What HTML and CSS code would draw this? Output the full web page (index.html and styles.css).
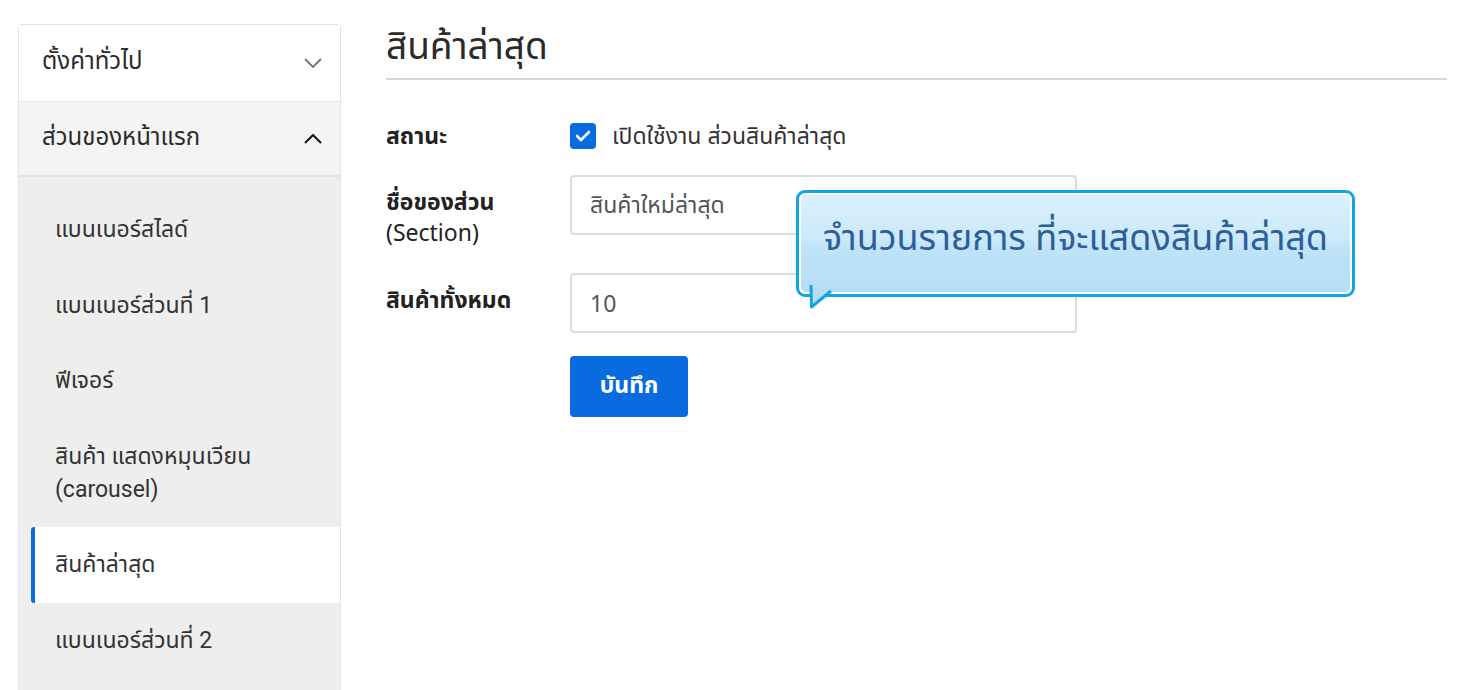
FILE: index.html
```html
<!DOCTYPE html>
<html lang="th">
<head>
    <meta charset="UTF-8">
    <meta name="viewport" content="width=device-width, initial-scale=1.0">
    <title>สินค้าล่าสุด</title>
    <link rel="stylesheet" href="styles.css">
</head>
<body>
    <div class="page">
        <!-- Settings menu -->
        <div class="sidebar">
            <div class="menu-head">
                <span>ตั้งค่าทั่วไป</span>
                <svg class="chevron chevron-down" width="18" height="10" viewBox="0 0 18 10"><path d="M1 1l8 8 8-8" fill="none" stroke="currentColor" stroke-width="1.8"/></svg>
            </div>
            <div class="menu-head open">
                <span>ส่วนของหน้าแรก</span>
                <svg class="chevron" width="18" height="10" viewBox="0 0 18 10"><path d="M1 9l8-8 8 8" fill="none" stroke="currentColor" stroke-width="2"/></svg>
            </div>
            <div class="sub-menu">
                <div class="sub-item">แบนเนอร์สไลด์</div>
                <div class="sub-item">แบนเนอร์ส่วนที่ 1</div>
                <div class="sub-item">ฟีเจอร์</div>
                <div class="sub-item">สินค้า แสดงหมุนเวียน<br>(carousel)</div>
                <div class="sub-item active">สินค้าล่าสุด</div>
                <div class="sub-item">แบนเนอร์ส่วนที่ 2</div>
            </div>
        </div>

        <!-- Latest products section -->
        <div class="content">
            <h1>สินค้าล่าสุด</h1>

            <form class="section-form">
                <div class="form-row check-row">
                    <label class="form-label">สถานะ</label>
                    <label class="check">
                        <span class="check-box">
                            <svg width="16" height="12" viewBox="0 0 16 12"><path d="M2 6l4 4 8-8" fill="none" stroke="#fff" stroke-width="2.6" stroke-linecap="round" stroke-linejoin="round"/></svg>
                        </span>
                        เปิดใช้งาน ส่วนสินค้าล่าสุด
                    </label>
                </div>
                <div class="form-row">
                    <label class="form-label" for="sectionName">ชื่อของส่วน<br><span class="normal">(Section)</span></label>
                    <input type="text" id="sectionName" value="สินค้าใหม่ล่าสุด">
                </div>
                <div class="form-row">
                    <label class="form-label" for="total">สินค้าทั้งหมด</label>
                    <input type="text" id="total" value="10">
                </div>
                <div class="form-actions">
                    <button type="button" class="save-button">บันทึก</button>
                </div>
            </form>

            <!-- Help bubble -->
            <div class="tip">
                <div class="tip-inner">จำนวนรายการ ที่จะแสดงสินค้าล่าสุด</div>
                <svg class="tip-tail" width="30" height="26" viewBox="0 0 30 26"><path d="M2 0 L2.5 22 L22 6" fill="#b7def6" stroke="#12a5e6" stroke-width="3" stroke-linejoin="round"/><rect x="4" y="0" width="18" height="4" fill="#b7def6"/></svg>
            </div>
        </div>
    </div>
</body>
</html>
```

FILE: styles.css
```css
/* Page */
body {
    margin: 0;
    background: #fff;
    font-family: "Noto Sans", "Noto Sans Thai", sans-serif;
    color: #333;
    height: 690px;
    overflow: hidden;
}

.page {
    display: flex;
    padding: 24px 15px 0 18px;
    position: relative;
}

/* Sidebar */
.sidebar {
    width: 321px;
    flex-shrink: 0;
    border: 1px solid #e3e3e3;
    border-bottom: none;
    border-radius: 4px 4px 0 0;
    min-height: 680px;
    background: #eee;
    font-family: Roboto, "Noto Sans Thai", sans-serif;
}

.menu-head {
    display: flex;
    align-items: center;
    justify-content: space-between;
    height: 76px;
    padding: 0 18px 0 23px;
    font-size: 24px;
    background: #fff;
    color: #2b2b2b;
}

.menu-head span {
    padding-bottom: 2px;
}

.menu-head.open {
    background: #f4f4f4;
    border-top: 1px solid #e6e6e6;
    border-bottom: 2px solid #e2e2e2;
    height: 73px;
}

.chevron {
    color: #111;
}

.chevron-down {
    color: #6c757d;
}

.sub-menu {
    padding-top: 15px;
}

.sub-item {
    margin-left: 12px;
    border-left: 4px solid transparent;
    padding: 21px 10px 21.5px 20px;
    font-size: 23px;
    line-height: 33px;
    color: #333;
}

.sub-item.active {
    background: #fff;
    border-left-color: #0a6be0;
    border-radius: 3px 0 0 3px;
}

/* Content */
.content {
    flex: 1;
    margin-left: 45px;
}

h1 {
    margin: 0;
    font-size: 37px;
    font-weight: normal;
    line-height: 42px;
    color: #2b2b2b;
    padding-bottom: 12px;
    border-bottom: 2px solid #d3d6db;
}

.section-form {
    margin-top: 40px;
}

.form-row {
    display: flex;
    align-items: flex-start;
    margin-bottom: 25px;
}

.check-row {
    align-items: center;
    height: 30px;
}

.form-label {
    width: 184px;
    flex-shrink: 0;
    padding-top: 11px;
    font-weight: bold;
    font-size: 23px;
    line-height: 31px;
    color: #222;
}

.check-row .form-label {
    padding-top: 0;
}

.normal {
    font-weight: normal;
}

.check {
    display: flex;
    align-items: center;
    gap: 16px;
    font-size: 23px;
    line-height: 30px;
    color: #333;
}

.check-box {
    display: flex;
    align-items: center;
    justify-content: center;
    width: 26px;
    height: 26px;
    margin-top: 1px;
    border-radius: 4px;
    background: #0a6be0;
}

input {
    width: 507px;
    height: 60px;
    box-sizing: border-box;
    border: 2px solid #dcdcdc;
    border-radius: 4px;
    padding: 0 18px;
    font-family: inherit;
    font-size: 23px;
    color: #555;
    outline: none;
}

.form-actions {
    padding-left: 184px;
    margin-top: -2px;
}

.save-button {
    width: 118px;
    height: 61px;
    padding-bottom: 4px;
    border: none;
    border-radius: 4px;
    background: #0a6be0;
    color: #fff;
    font-family: inherit;
    font-size: 23px;
    font-weight: bold;
    cursor: pointer;
}

/* Help bubble */
.tip {
    position: absolute;
    left: 796px;
    top: 190px;
    width: 559px;
    height: 107px;
    box-sizing: border-box;
    border: 3px solid #12a5e6;
    border-radius: 9px;
    background: #fff;
    padding: 2px;
}

.tip-inner {
    height: 100%;
    box-sizing: border-box;
    padding-bottom: 10px;
    border-radius: 5px;
    background: linear-gradient(to bottom, #dbf0fc 0%, #cbe9fa 45%, #bfe3f8 55%, #b5def6 100%);
    display: flex;
    align-items: center;
    justify-content: center;
    font-size: 36px;
    color: #2d5e98;
}

.tip-tail {
    position: absolute;
    left: 10px;
    bottom: -17px;
}
```
